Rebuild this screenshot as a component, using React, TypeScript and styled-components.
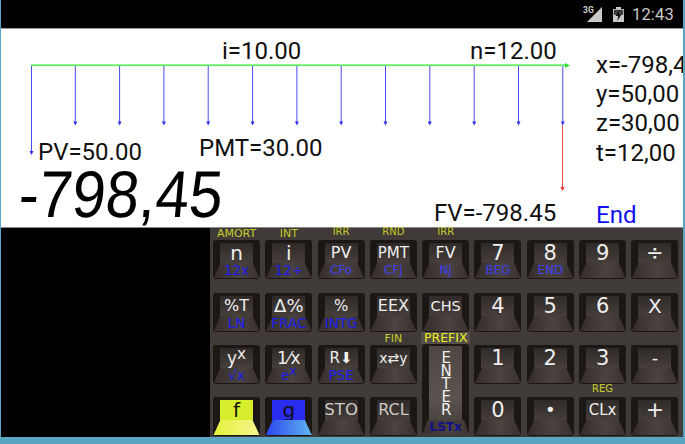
import React from "react";
import styled, { createGlobalStyle } from "styled-components";

const Global = createGlobalStyle`
  html, body { margin: 0; padding: 0; background: #5aa6c2; overflow: hidden; }
`;

const Screen = styled.div`
  width: 683px;
  height: 444px;
  display: flex;
  flex-direction: column;
  background: #000;
  border-left: 1px solid #5aa6c2;
  box-sizing: border-box;
  overflow: hidden;
  font-family: Roboto, "Liberation Sans", sans-serif;
`;

const StatusBar = styled.div`
  height: 28px;
  flex: none;
  display: flex;
  align-items: center;
  justify-content: flex-end;
  padding-right: 9px;
  background: #000;
  color: #c9c9c9;
`;

const StatusIcons = styled.svg`
  display: block;
  margin-right: 6px;
`;

const Clock = styled.span`
  font-size: 16.5px;
  letter-spacing: 0.2px;
`;

const Display = styled.div`
  height: 200px;
  flex: none;
  display: flex;
  background: #fff;
  border-top: 1px solid #9a9a9a;
  border-bottom: 1px solid #888;
  box-sizing: border-box;
  color: #111;
`;

const ChartArea = styled.div`
  position: relative;
  width: 595px;
  flex: none;
`;

const ChartSvg = styled.svg`
  display: block;
`;

const ChartLabel = styled.span<{ $x: number; $y: number }>`
  position: absolute;
  left: ${(p) => p.$x}px;
  top: ${(p) => p.$y}px;
  font-size: 24px;
  line-height: 28px;
  white-space: nowrap;
`;

const BigNumber = styled.span`
  position: absolute;
  left: 16px;
  top: 140px;
  font-family: "Liberation Sans", sans-serif;
  font-size: 66px;
  line-height: 50px;
  color: #000;
  white-space: nowrap;
  transform-origin: left bottom;
  transform: skewX(-5deg) scaleX(0.91);
`;

const Registers = styled.div`
  flex: 1;
  min-width: 0;
  display: flex;
  flex-direction: column;
  padding-top: 22px;
  overflow-x: clip;
`;

const Register = styled.div`
  font-size: 24px;
  line-height: 29.2px;
  white-space: nowrap;
`;

const Mode = styled.div`
  margin-top: auto;
  color: #1010f0;
  font-size: 24px;
  line-height: 24px;
`;

const Lower = styled.div`
  flex: 1;
  display: flex;
  min-height: 0;
`;

const BlackGap = styled.div`
  width: 209px;
  flex: none;
  background: #000;
`;

const Keypad = styled.div`
  flex: 1;
  display: grid;
  grid-template-columns: repeat(9, 47px);
  grid-template-rows: 51px 53px 52px 52px;
  column-gap: 5.3px;
  padding-left: 3px;
  background: #403b38;
`;

const Cell = styled.div<{ $tall?: boolean }>`
  display: flex;
  flex-direction: column;
  justify-content: flex-end;
  align-items: stretch;
  min-width: 0;
  ${(p) => p.$tall && "grid-row: span 2;"}
`;

const TopLabel = styled.span<{ $small?: boolean }>`
  font-family: "DejaVu Sans", sans-serif;
  font-size: ${(p) => (p.$small ? "10px" : "11px")};
  line-height: 12px;
  margin-bottom: ${(p) => (p.$small ? "2px" : "0")};
  text-align: center;
  white-space: nowrap;
  color: #c6cc2c;
`;

const PrefixLabel = styled.span`
  font-family: "DejaVu Sans", sans-serif;
  font-size: 12.5px;
  line-height: 11px;
  padding-bottom: 1px;
  margin: 0 -1px;
  text-align: center;
  white-space: nowrap;
  color: #efef18;
  background: #55504c;
`;

const KeyBody = styled.div`
  height: 39px;
  flex: none;
  display: flex;
  flex-direction: column;
  align-items: center;
  padding-top: 3px;
  box-sizing: border-box;
  background: #1b1715;
  border-radius: 3px;
`;

type Tone = "plain" | "yellow" | "blue";

const faceColor: Record<Tone, string> = {
  plain: "linear-gradient(180deg,#2f2a28,#453e3b)",
  yellow: "#d7ee2c",
  blue: "#2a2cf0",
};
const skirtColor: Record<Tone, string> = {
  plain: "linear-gradient(90deg,#342d2b,#4a4340 55%,#383130)",
  yellow: "linear-gradient(90deg,#e6f23c,#f3f58e)",
  blue: "linear-gradient(90deg,#2c46f0,#5fb6f0)",
};

const Face = styled.div<{ $tone: Tone; $light?: boolean }>`
  width: 33px;
  height: 20px;
  flex: none;
  display: flex;
  align-items: center;
  justify-content: center;
  background: ${(p) => faceColor[p.$tone]};
  color: ${(p) => (p.$tone === "plain" ? (p.$light ? "#cfcac7" : "#eeeeee") : "#111")};
  font-family: "DejaVu Sans", sans-serif;
  font-size: 21px;
  line-height: 20px;
  white-space: nowrap;
`;

const Skirt = styled.div<{ $tone: Tone; $soft?: boolean }>`
  width: 46px;
  height: 15px;
  flex: none;
  display: flex;
  align-items: center;
  justify-content: center;
  background: ${(p) => skirtColor[p.$tone]};
  clip-path: polygon(15% 0, 85% 0, 100% 100%, 0 100%);
  color: ${(p) => (p.$soft ? "#3f3ff4" : "#1c1cea")};
  font-family: "DejaVu Sans", sans-serif;
  font-size: ${(p) => (p.$soft ? "12px" : "13.5px")};
  line-height: 15px;
  white-space: nowrap;
`;

const FaceText = styled.span<{ $size: number }>`
  font-size: ${(p) => p.$size}px;
`;

const Sup = styled.span`
  font-size: 0.9em;
  line-height: 0;
  position: relative;
  top: -0.35em;
`;

const Radical = styled.span`
  text-decoration: overline;
`;

const TallBody = styled.div`
  flex: 1;
  display: flex;
  flex-direction: column;
  align-items: center;
  margin-bottom: 2px;
  padding-top: 2px;
  box-sizing: border-box;
  background: #1b1715;
  border-radius: 4px;
`;

const TallFace = styled.div`
  width: 33px;
  flex: 1;
  display: flex;
  justify-content: center;
  overflow: hidden;
  background: linear-gradient(180deg,#4d4643,#5a5350 70%,#4a4441);
`;

const EnterText = styled.span`
  writing-mode: vertical-rl;
  text-orientation: upright;
  color: #eee;
  font-family: "DejaVu Sans", sans-serif;
  font-size: 15px;
  line-height: 33px;
  letter-spacing: -5px;
  padding-top: 3px;
`;

const TallFoot = styled.div`
  width: 46px;
  height: 14px;
  flex: none;
  text-align: center;
  color: #10108c;
  background: linear-gradient(90deg,#37302e,#4a4340 55%,#3d3634);
  clip-path: polygon(10% 0, 90% 0, 100% 100%, 0 100%);
  font-family: "DejaVu Sans", sans-serif;
  font-weight: bold;
  font-size: 12px;
  line-height: 14px;
`;

const Footer = styled.div`
  height: 7px;
  flex: none;
  background: #5aa6c2;
`;

type KeyDef = {
  top?: string;
  smallTop?: boolean;
  main: React.ReactNode;
  sub?: React.ReactNode;
  soft?: boolean;
  tone?: Tone;
  light?: boolean;
};

const keys: KeyDef[] = [
  { top: "AMORT", main: <FaceText $size={20}>n</FaceText>, sub: "12x" },
  { top: "INT", main: <FaceText $size={20}>i</FaceText>, sub: "12÷" },
  { top: "IRR", smallTop: true, main: <FaceText $size={16}>PV</FaceText>, sub: "CFo", soft: true },
  { top: "RND", smallTop: true, main: <FaceText $size={15}>PMT</FaceText>, sub: "CFj", soft: true },
  { top: "IRR", smallTop: true, main: <FaceText $size={16}>FV</FaceText>, sub: "Nj", soft: true },
  { main: "7", sub: "BEG", soft: true },
  { main: "8", sub: "END", soft: true },
  { main: "9" },
  { main: "÷" },
  { main: <FaceText $size={16}>%T</FaceText>, sub: "LN" },
  { main: <FaceText $size={18}>Δ%</FaceText>, sub: "FRAC" },
  { main: <FaceText $size={15}>%</FaceText>, sub: "INTG" },
  { main: <FaceText $size={16}>EEX</FaceText> },
  { main: <FaceText $size={14.5}>CHS</FaceText> },
  { main: "4" },
  { main: "5" },
  { main: "6" },
  { main: <FaceText $size={20}>X</FaceText> },
  { main: <FaceText $size={17}>y<Sup>x</Sup></FaceText>, sub: <Radical>√x</Radical> },
  { main: <FaceText $size={17}>1⁄x</FaceText>, sub: <>e<Sup>x</Sup></> },
  { main: <FaceText $size={15}>R⬇</FaceText>, sub: "PSE" },
  { top: "FIN", main: <FaceText $size={14}>x⇄y</FaceText> },
];

const keysAfterEnter: KeyDef[] = [
  { main: "1" },
  { main: "2" },
  { main: "3" },
  { main: <FaceText $size={18}>-</FaceText> },
  { main: <FaceText $size={20}>f</FaceText>, tone: "yellow" },
  { main: <FaceText $size={20}>g</FaceText>, tone: "blue" },
  { main: <FaceText $size={16.5}>STO</FaceText>, light: true },
  { main: <FaceText $size={16}>RCL</FaceText>, light: true },
  { main: "0" },
  { main: <FaceText $size={18}>•</FaceText> },
  { top: "REG", smallTop: true, main: <FaceText $size={15}>CLx</FaceText> },
  { main: <FaceText $size={22}>+</FaceText> },
];

const CalcKey = ({ def }: { def: KeyDef }) => {
  const tone = def.tone ?? "plain";
  return (
    <Cell>
      {def.top && <TopLabel $small={def.smallTop}>{def.top}</TopLabel>}
      <KeyBody>
        <Face $tone={tone} $light={def.light}>{def.main}</Face>
        <Skirt $tone={tone} $soft={def.soft}>{def.sub}</Skirt>
      </KeyBody>
    </Cell>
  );
};

const payments = [75.3, 119.6, 163.9, 208.2, 252.6, 296.9, 341.2, 385.5, 429.8, 474.2, 518.5, 562.8];

const Chart = () => (
  <ChartSvg width="595" height="198" viewBox="1 29 595 198">
    <line x1="31.5" y1="65" x2="31.5" y2="152" stroke="#4a4af0" strokeWidth="1" />
    <polygon points="29.5,151 33.5,151 31.5,155" fill="#3030f0" />
    {payments.map((x) => (
      <g key={x}>
        <line x1={x} y1="65" x2={x} y2="122" stroke="#4a4af0" strokeWidth="1" />
        <polygon points={`${x - 2},121.5 ${x + 2},121.5 ${x},125.5`} fill="#3030f0" />
      </g>
    ))}
    <rect x="31" y="64.4" width="535" height="1.6" fill="#58f058" />
    <polygon points="565,63 570,65.5 565,68" fill="#30e030" />
    <line x1="562.5" y1="125" x2="562.5" y2="187" stroke="#f05050" strokeWidth="1" />
    <polygon points="560.5,187 564.5,187 562.5,191" fill="#f02020" />
  </ChartSvg>
);

export default function App() {
  return (
    <>
      <Global />
      <Screen>
        <StatusBar>
          <StatusIcons width="44" height="18" viewBox="0 0 44 18">
            <polygon points="5,17 20,2 20,17" fill="#c9c9c9" />
            <text x="1" y="8" fontSize="8.5" fontWeight="bold" fill="#c9c9c9" fontFamily="Roboto, sans-serif">3G</text>
            <rect x="31" y="4" width="11" height="13" fill="#c9c9c9" />
            <rect x="34" y="2" width="5" height="2" fill="#c9c9c9" />
            <rect x="31.8" y="4.8" width="9.4" height="5" fill="#3d3d3d" />
            <polygon points="37.5,5 33.5,11 36.2,11 35.2,16 39.5,9.5 36.8,9.5" fill="#111" />
          </StatusIcons>
          <Clock>12:43</Clock>
        </StatusBar>
        <Display>
          <ChartArea>
            <Chart />
            <ChartLabel $x={221} $y={8}>i=10.00</ChartLabel>
            <ChartLabel $x={469} $y={8}>n=12.00</ChartLabel>
            <ChartLabel $x={37} $y={109}>PV=50.00</ChartLabel>
            <ChartLabel $x={198} $y={105}>PMT=30.00</ChartLabel>
            <ChartLabel $x={433} $y={170}>FV=-798.45</ChartLabel>
            <BigNumber>-798,45</BigNumber>
          </ChartArea>
          <Registers>
            <Register>x=-798,45</Register>
            <Register>y=50,00</Register>
            <Register>z=30,00</Register>
            <Register>t=12,00</Register>
            <Mode>End</Mode>
          </Registers>
        </Display>
        <Lower>
          <BlackGap />
          <Keypad>
            {keys.map((k, i) => <CalcKey key={i} def={k} />)}
            <Cell $tall>
              <PrefixLabel>PREFIX</PrefixLabel>
              <TallBody>
                <TallFace>
                  <EnterText>ENTER</EnterText>
                </TallFace>
                <TallFoot>LSTx</TallFoot>
              </TallBody>
            </Cell>
            {keysAfterEnter.map((k, i) => <CalcKey key={i} def={k} />)}
          </Keypad>
        </Lower>
        <Footer />
      </Screen>
    </>
  );
}
